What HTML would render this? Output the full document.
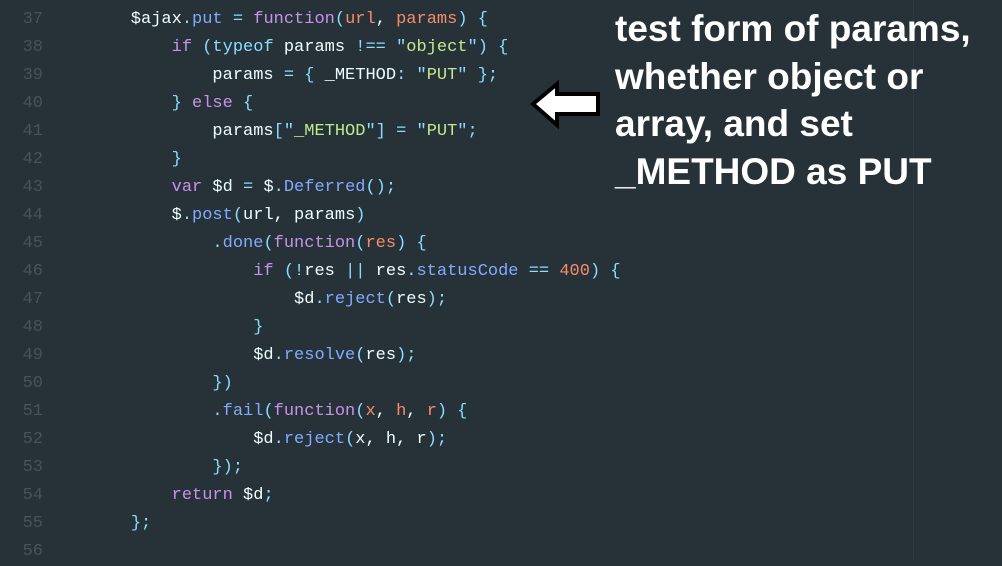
<!DOCTYPE html>
<html><head><style>
body{margin:0;width:1002px;height:559px;background:#263238;overflow:hidden;position:relative;font-family:"Liberation Mono",monospace;}
.l{position:absolute;left:0;height:28px;line-height:28px;font-size:17px;white-space:pre;color:#eeffff;}
.n{position:absolute;left:0;width:43px;text-align:right;color:#46535d;}
.c{position:absolute;left:90px;}
.k{color:#c792ea}.p{color:#f78c6c}.f{color:#82aaff}.u{color:#89ddff}.s{color:#c3e88d}
.note{position:absolute;left:615px;top:5px;font-family:"Liberation Sans",sans-serif;font-weight:bold;font-size:37px;line-height:47.5px;color:#fff;}
.ruler{position:absolute;left:913px;top:0;width:1px;height:559px;background:#2e3a42;}
</style></head><body>
<div class="ruler"></div>
<div class="l" style="top:6px"><span class="n">37</span><span class="c">    $ajax<span class="u">.</span><span class="f">put</span> <span class="u">=</span> <span class="k">function</span><span class="u">(</span><span class="p">url</span>, <span class="p">params</span><span class="u">) {</span></span></div>
<div class="l" style="top:34px"><span class="n">38</span><span class="c">        <span class="k">if</span> <span class="u">(typeof</span> params <span class="u">!==</span> <span class="u">"</span><span class="s">object</span><span class="u">") {</span></span></div>
<div class="l" style="top:62px"><span class="n">39</span><span class="c">            params <span class="u">=</span> <span class="u">{</span> _METHOD<span class="u">:</span> <span class="u">"</span><span class="s">PUT</span><span class="u">" };</span></span></div>
<div class="l" style="top:90px"><span class="n">40</span><span class="c">        <span class="u">}</span> <span class="k">else</span> <span class="u">{</span></span></div>
<div class="l" style="top:118px"><span class="n">41</span><span class="c">            params<span class="u">["</span><span class="s">_METHOD</span><span class="u">"]</span> <span class="u">=</span> <span class="u">"</span><span class="s">PUT</span><span class="u">";</span></span></div>
<div class="l" style="top:146px"><span class="n">42</span><span class="c">        <span class="u">}</span></span></div>
<div class="l" style="top:174px"><span class="n">43</span><span class="c">        <span class="k">var</span> $d <span class="u">=</span> $<span class="u">.</span><span class="f">Deferred</span><span class="u">();</span></span></div>
<div class="l" style="top:202px"><span class="n">44</span><span class="c">        $<span class="u">.</span><span class="f">post</span><span class="u">(</span>url, params<span class="u">)</span></span></div>
<div class="l" style="top:230px"><span class="n">45</span><span class="c">            <span class="u">.</span><span class="f">done</span><span class="u">(</span><span class="k">function</span><span class="u">(</span><span class="p">res</span><span class="u">) {</span></span></div>
<div class="l" style="top:258px"><span class="n">46</span><span class="c">                <span class="k">if</span> <span class="u">(!</span>res <span class="u">||</span> res<span class="u">.</span><span class="f">statusCode</span> <span class="u">==</span> <span class="p">400</span><span class="u">) {</span></span></div>
<div class="l" style="top:286px"><span class="n">47</span><span class="c">                    $d<span class="u">.</span><span class="f">reject</span><span class="u">(</span>res<span class="u">);</span></span></div>
<div class="l" style="top:314px"><span class="n">48</span><span class="c">                <span class="u">}</span></span></div>
<div class="l" style="top:342px"><span class="n">49</span><span class="c">                $d<span class="u">.</span><span class="f">resolve</span><span class="u">(</span>res<span class="u">);</span></span></div>
<div class="l" style="top:370px"><span class="n">50</span><span class="c">            <span class="u">})</span></span></div>
<div class="l" style="top:398px"><span class="n">51</span><span class="c">            <span class="u">.</span><span class="f">fail</span><span class="u">(</span><span class="k">function</span><span class="u">(</span><span class="p">x</span>, <span class="p">h</span>, <span class="p">r</span><span class="u">) {</span></span></div>
<div class="l" style="top:426px"><span class="n">52</span><span class="c">                $d<span class="u">.</span><span class="f">reject</span><span class="u">(</span>x, h, r<span class="u">);</span></span></div>
<div class="l" style="top:454px"><span class="n">53</span><span class="c">            <span class="u">});</span></span></div>
<div class="l" style="top:482px"><span class="n">54</span><span class="c">        <span class="k">return</span> $d<span class="u">;</span></span></div>
<div class="l" style="top:510px"><span class="n">55</span><span class="c">    <span class="u">};</span></span></div>
<div class="l" style="top:538px"><span class="n">56</span></div>
<svg style="position:absolute;left:528px;top:80px" width="76" height="50" viewBox="0 0 76 50">
<path d="M5 24 L29 4 L29 14 L70 14 L70 34 L29 34 L29 45 Z" fill="#fff" stroke="#000" stroke-width="4" stroke-linejoin="miter"/>
</svg>
<div class="note">test form of params,<br>whether object or<br>array, and set<br>_METHOD as PUT</div>
</body></html>
